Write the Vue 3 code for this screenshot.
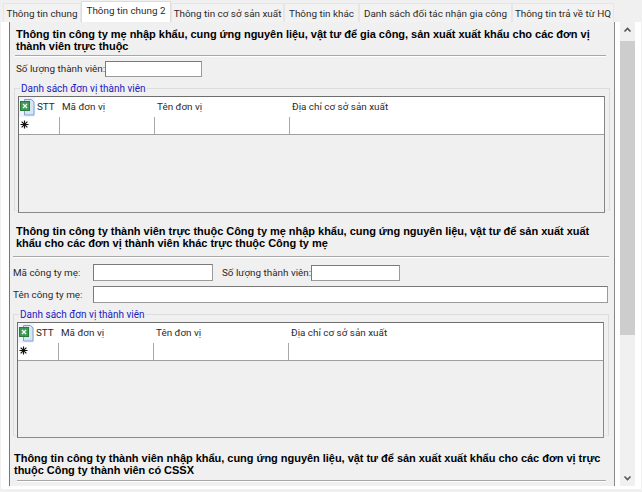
<script setup>
const tabs = [
  { label: 'Thông tin chung', width: 78 },
  { label: 'Thông tin chung 2', width: 90, active: true },
  { label: 'Thông tin cơ sở sản xuất', width: 113 },
  { label: 'Thông tin khác', width: 75 },
  { label: 'Danh sách đối tác nhận gia công', width: 153 },
  { label: 'Thông tin trả về từ HQ', width: 102 }
]
const columns = [
  { label: 'STT', width: 25 },
  { label: 'Mã đơn vị', width: 95 },
  { label: 'Tên đơn vị', width: 135 },
  { label: 'Địa chỉ cơ sở sản xuất', width: 315 }
]
</script>

<template>
  <div class="window">
    <div class="tabs">
      <div
        v-for="tab in tabs"
        :key="tab.label"
        class="tab"
        :class="{ active: tab.active }"
        :style="{ width: tab.width + 'px' }"
      >{{ tab.label }}</div>
    </div>
    <div class="page">
      <div class="frame">
        <div class="content">
          <section class="first">
            <h3>Thông tin công ty mẹ nhập khẩu, cung ứng nguyên liệu, vật tư để gia công, sản xuất xuất khẩu cho các đơn vị<br />thành viên trực thuộc</h3>
            <div class="rule"></div>
            <div class="row count-row">
              <label>Số lượng thành viên:</label>
              <input class="input count" />
            </div>
            <fieldset>
              <legend>Danh sách đơn vị thành viên</legend>
              <div class="grid">
                <div class="grid-head">
                  <div class="corner">
                    <svg width="16" height="20" viewBox="0 0 16 20">
                      <path d="M5.5 2.5h7l2.5 2.5v13H5.5z" fill="#d6e4f5" stroke="#7f9fca" />
                      <rect x="1.5" y="4.5" width="9" height="9" fill="#3f9c55" stroke="#2a7a3e" />
                      <path d="M4 7l4 4M8 7l-4 4" stroke="#fff" stroke-width="1.3" />
                    </svg>
                  </div>
                  <div v-for="col in columns" :key="col.label" class="col-title" :style="{ width: col.width + 'px' }">{{ col.label }}</div>
                </div>
                <div class="grid-new">
                  <div class="marker">
                    <svg width="9" height="9" viewBox="0 0 10 10">
                      <path d="M5 .5v9M.5 5h9M1.8 1.8l6.4 6.4M8.2 1.8L1.8 8.2" stroke="#111" stroke-width="1.3" />
                    </svg>
                  </div>
                  <div v-for="col in columns" :key="col.label" class="cell" :style="{ width: col.width + 'px' }"></div>
                </div>
              </div>
            </fieldset>
          </section>

          <section class="second">
            <h3>Thông tin công ty thành viên trực thuộc Công ty mẹ nhập khẩu, cung ứng nguyên liệu, vật tư để sản xuất xuất<br />khẩu cho các đơn vị thành viên khác trực thuộc Công ty mẹ</h3>
            <div class="rule"></div>
            <div class="row mother-row">
              <label class="mother-label">Mã công ty mẹ:</label>
              <input class="input mother-code" />
              <label class="mother-count-label">Số lượng thành viên:</label>
              <input class="input mother-count" />
            </div>
            <div class="row mother-row">
              <label class="mother-label">Tên công ty mẹ:</label>
              <input class="input mother-name" />
            </div>
            <fieldset class="short">
              <legend>Danh sách đơn vị thành viên</legend>
              <div class="grid">
                <div class="grid-head">
                  <div class="corner">
                    <svg width="16" height="20" viewBox="0 0 16 20">
                      <path d="M5.5 2.5h7l2.5 2.5v13H5.5z" fill="#d6e4f5" stroke="#7f9fca" />
                      <rect x="1.5" y="4.5" width="9" height="9" fill="#3f9c55" stroke="#2a7a3e" />
                      <path d="M4 7l4 4M8 7l-4 4" stroke="#fff" stroke-width="1.3" />
                    </svg>
                  </div>
                  <div v-for="col in columns" :key="col.label" class="col-title" :style="{ width: col.width + 'px' }">{{ col.label }}</div>
                </div>
                <div class="grid-new">
                  <div class="marker">
                    <svg width="9" height="9" viewBox="0 0 10 10">
                      <path d="M5 .5v9M.5 5h9M1.8 1.8l6.4 6.4M8.2 1.8L1.8 8.2" stroke="#111" stroke-width="1.3" />
                    </svg>
                  </div>
                  <div v-for="col in columns" :key="col.label" class="cell" :style="{ width: col.width + 'px' }"></div>
                </div>
              </div>
            </fieldset>
          </section>

          <section class="third">
            <h3>Thông tin công ty thành viên nhập khẩu, cung ứng nguyên liệu, vật tư để sản xuất xuất khẩu cho các đơn vị trực<br />thuộc Công ty thành viên có CSSX</h3>
            <div class="rule"></div>
          </section>
        </div>
      </div>
      <div class="scrollbar">
        <svg class="arrow" width="15" height="16" viewBox="0 0 15 16"><path d="M4.5 9.5l3-3 3 3" fill="none" stroke="#555" stroke-width="1.6" /></svg>
        <div class="track"><div class="thumb"></div></div>
        <svg class="arrow" width="15" height="16" viewBox="0 0 15 16"><path d="M4.5 6.5l3 3 3-3" fill="none" stroke="#555" stroke-width="1.6" /></svg>
      </div>
    </div>
  </div>
</template>

<style scoped>
.window {
  width: 642px;
  height: 492px;
  background: #f0f0f0;
  font-family: Roboto, "Liberation Sans", sans-serif;
  font-size: 9.9px;
  color: #2a2a2a;
  display: flex;
  flex-direction: column;
  overflow: hidden;
}
.tabs {
  display: flex;
  height: 22px;
  padding: 1px 0 0 3px;
  box-sizing: border-box;
  flex: none;
}
.tab {
  box-sizing: border-box;
  height: 19px;
  margin-top: 2px;
  background: #f2f2f2;
  border: 1px solid #e6e6e6;
  border-bottom: 0;
  line-height: 19px;
  text-align: center;
  white-space: nowrap;
  overflow: hidden;
}
.tab.active {
  height: 21px;
  margin-top: 0;
  background: #fff;
  border-color: #dcdcdc;
  line-height: 18px;
}
.page {
  flex: none;
  width: 640px;
  height: 467px;
  margin-left: 1px;
  background: #fff;
  display: flex;
  align-items: flex-start;
  padding-left: 8px;
  box-sizing: border-box;
  overflow: hidden;
}
.frame {
  width: 606px;
  height: 464px;
  flex: none;
  box-sizing: border-box;
  border-left: 1px solid #777;
  border-right: 1px solid #888;
  background: #f0f0f0;
  overflow: hidden;
}
.content {
  padding-top: 6px;
}
h3 {
  margin: 0 0 0 6px;
  font-family: "Liberation Sans", Arial, sans-serif;
  font-size: 11px;
  line-height: 12px;
  font-weight: bold;
  color: #000;
  letter-spacing: -0.03px;
  white-space: nowrap;
}
.rule {
  height: 1px;
  background: #a8a8a8;
  border-bottom: 1px solid #fff;
}
.first .rule {
  margin: 3px 8px 0 5px;
}
.row {
  display: flex;
  align-items: center;
}
label {
  white-space: nowrap;
}
.input {
  box-sizing: border-box;
  background: #fff;
  border: 1px solid #7a7a7a;
  border-right-color: #9a9a9a;
  border-bottom-color: #9a9a9a;
  padding: 0;
  margin: 0;
  outline: none;
  display: block;
}
.count-row {
  margin: 3px 0 0 6px;
  height: 17px;
}
.count-row label {
  width: 89px;
  flex: none;
}
.count {
  width: 97px;
  height: 16px;
}
fieldset {
  margin: 5px 0 0 4px;
  width: 596px;
  height: 129px;
  box-sizing: border-box;
  border: 1px solid #dcdcdc;
  border-bottom-color: #e6e6e6;
  padding: 0 3px;
  min-width: 0;
}
legend {
  margin-left: 2px;
  padding: 0 1px;
  color: #2020c0;
  line-height: 13px;
  font-size: 10px;
}
.grid {
  height: 117px;
  box-sizing: border-box;
  border: 1px solid #6e6e6e;
  border-right-color: #888;
  border-bottom-color: #8a8a8a;
  width: 587px;
  margin-top: 1px;
  background: #f0f0f0;
}
.grid-head {
  display: flex;
  height: 20px;
  background: #fff;
}
.grid-new {
  display: flex;
  height: 18px;
  background: #fff;
  border-bottom: 1px solid #a0a0a0;
  box-sizing: border-box;
}
.corner {
  width: 16px;
  flex: none;
  background: #f0f4fa;
  line-height: 0;
}
.marker {
  width: 16px;
  flex: none;
  background: #fff;
  line-height: 0;
  padding: 3px 0 0 1px;
  box-sizing: border-box;
}
.col-title {
  flex: none;
  box-sizing: border-box;
  padding: 4px 0 0 2px;
  white-space: nowrap;
}
.cell {
  flex: none;
  box-sizing: border-box;
  border-right: 1px solid #a8a8a8;
}
.cell:last-child {
  border-right-color: #888;
}
.second {
  padding-top: 7px;
}
.second h3 {
  padding-top: 7px;
}
.second .rule {
  margin: 7px 5px 0 3px;
}
.mother-row {
  height: 17px;
  margin: 6px 0 0 3px;
}
.mother-row + .mother-row {
  margin-top: 5px;
}
.mother-label {
  width: 80px;
  flex: none;
}
.mother-code {
  width: 120px;
  height: 17px;
}
.mother-count-label {
  margin-left: 9px;
  width: 89px;
  flex: none;
}
.mother-count {
  width: 89px;
  height: 16px;
}
.mother-name {
  width: 515px;
  height: 17px;
}
.short {
  margin: 5px 0 0 3px;
  height: 128px;
}
.short .grid {
  height: 116px;
}
.third {
  padding-top: 16px;
}
.third h3 {
  margin-left: 4px;
}
.third .rule {
  margin: 4px 8px 0 7px;
}
.scrollbar {
  width: 15px;
  height: 464px;
  flex: none;
  margin-left: 5px;
  display: flex;
  flex-direction: column;
  background: #f0f0f0;
}
.arrow {
  flex: none;
  display: block;
}
.track {
  flex: 1;
  padding-top: 3px;
}
.thumb {
  height: 294px;
  background: #cdcdcd;
}
</style>
